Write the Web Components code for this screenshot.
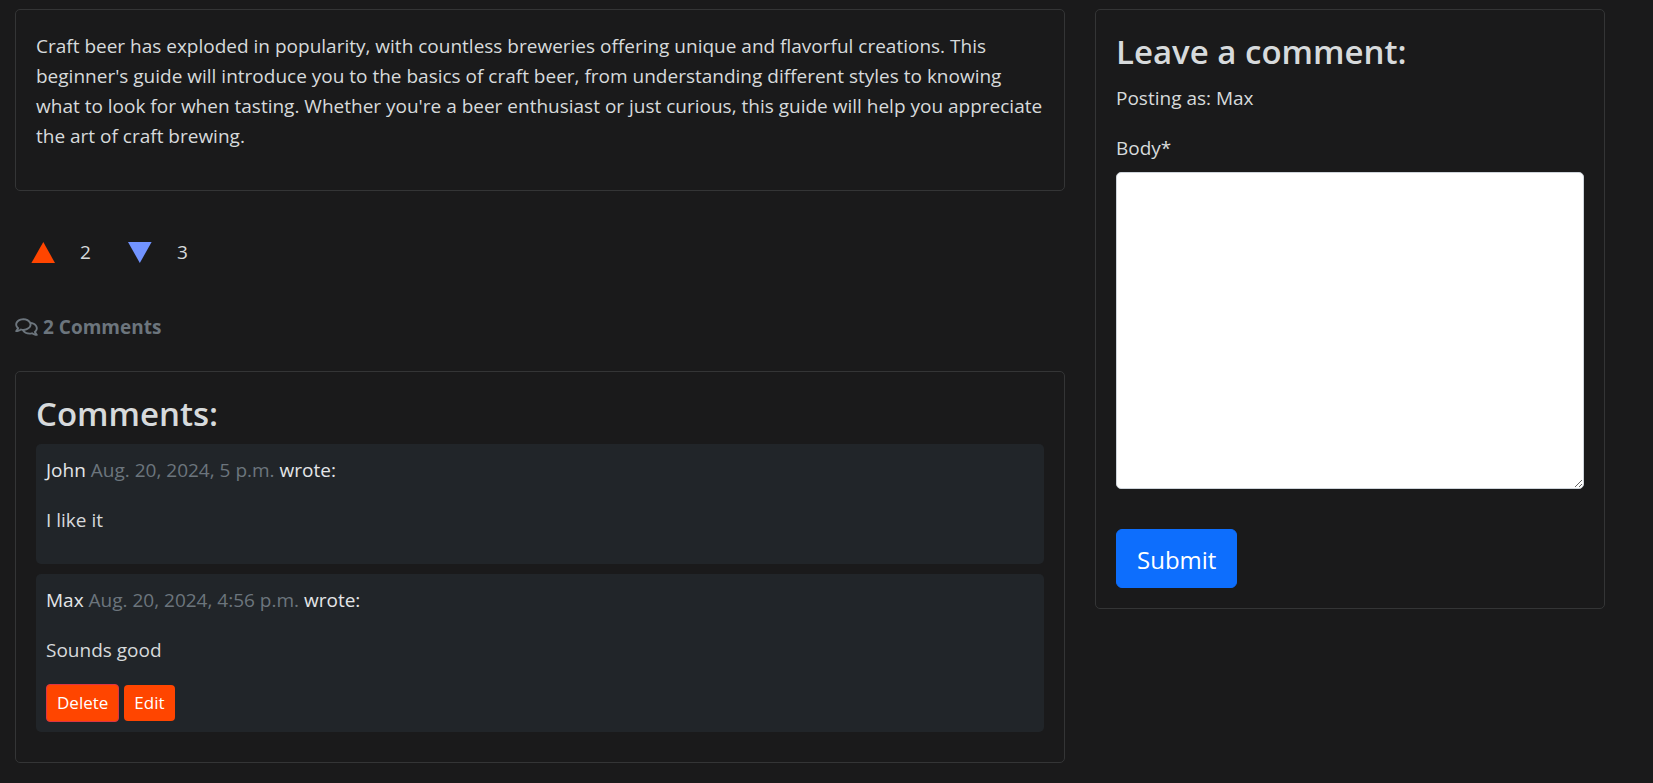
<!DOCTYPE html>
<html lang="en">
<head>
<meta charset="utf-8">
<meta name="viewport" content="width=device-width, initial-scale=1">
<title>Craft beer guide</title>
<style>
  body {
    margin: 0;
    background: #1a1a1b;
    color: #d7dadc;
    font: 19px/30px "Open Sans", "Noto Sans", sans-serif;
  }
</style>
</head>
<body>
<post-page>
  <ui-card>
    <post-text>Craft beer has exploded in popularity, with countless breweries offering unique and flavorful creations. This beginner's guide will introduce you to the basics of craft beer, from understanding different styles to knowing what to look for when tasting. Whether you're a beer enthusiast or just curious, this guide will help you appreciate the art of craft brewing.</post-text>
  </ui-card>
  <vote-bar up="2" down="3"></vote-bar>
  <comment-count>2 Comments</comment-count>
  <ui-card heading="Comments:">
    <user-comment author="John" date="Aug. 20, 2024, 5 p.m.">I like it</user-comment>
    <user-comment author="Max" date="Aug. 20, 2024, 4:56 p.m." editable>Sounds good</user-comment>
  </ui-card>
  <ui-card slot="side" heading="Leave a comment:">
    <comment-form user="Max"></comment-form>
  </ui-card>
</post-page>

<script>
const define = (name, html, setup) => customElements.define(name, class extends HTMLElement {
  connectedCallback() {
    if (this.shadowRoot) return;
    const root = this.attachShadow({ mode: "open" });
    const template = document.createElement("template");
    template.innerHTML = html;
    root.append(template.content.cloneNode(true));
    if (setup) setup(this, root);
  }
});

define("post-page", `
  <style>
    :host { display: block; padding: 9px 33px 20px 0; }
    .row { display: grid; grid-template-columns: 2fr 1fr; align-items: start; }
    main, aside { padding: 0 15px; min-width: 0; }
  </style>
  <div class="row">
    <main><slot></slot></main>
    <aside><slot name="side"></slot></aside>
  </div>`);

define("ui-card", `
  <style>
    :host { display: block; border: 1px solid #343536; border-radius: 5px; padding: 21px 20px 20px; }
    h3 { margin: 0 0 9px; font-size: 33px; line-height: 42px; font-weight: 600; }
    h3[hidden] { display: none; }
  </style>
  <h3 hidden></h3>
  <slot></slot>`, (host, root) => {
    const title = host.getAttribute("heading");
    if (title) {
      const h = root.querySelector("h3");
      h.textContent = title;
      h.hidden = false;
    }
  });

define("post-text", `
  <style>
    :host { display: block; }
    p { margin: 0 0 19px; }
  </style>
  <p><slot></slot></p>`);

define("vote-bar", `
  <style>
    :host { display: flex; align-items: center; padding: 46px 15px 45px; }
    button { border: 0; background: none; padding: 0; margin-right: 25px; width: 25px; display: grid; place-items: center; }
    span { width: 20px; margin-right: 27px; }
    svg { display: block; }
  </style>
  <button type="button" aria-label="Upvote"><svg width="25" height="21" viewBox="0 0 25 21"><path fill="#ff4500" d="M13.3 0 25 21H1.4z"/></svg></button>
  <span id="up"></span>
  <button type="button" aria-label="Downvote"><svg width="25" height="21" viewBox="0 0 25 21"><path fill="#7193ff" d="M12.8 21 24.6 0H1z"/></svg></button>
  <span id="down"></span>`, (host, root) => {
    root.getElementById("up").textContent = host.getAttribute("up");
    root.getElementById("down").textContent = host.getAttribute("down");
  });

define("comment-count", `
  <style>
    :host { display: flex; align-items: center; gap: 5px; margin-bottom: 29px; color: #6c757d; font-weight: 700; }
    svg { display: block; fill: currentColor; }
  </style>
  <svg width="23" height="20" viewBox="0 0 576 512" aria-hidden="true"><path d="M532 386.2c27.5-27.1 44-61.1 44-98.2 0-80-76.5-146.1-176.2-157.9C368.3 72.5 294.3 32 208 32 93.1 32 0 103.6 0 192c0 37 16.5 71 44 98.2-15.3 30.7-37.3 54.5-37.7 54.9-6.3 6.7-8.1 16.5-4.4 25 3.6 8.5 12 14 21.2 14 53.5 0 96.7-20.2 125.2-38.8 9.2 2.1 18.7 3.7 28.4 4.9C208.1 407.6 281.8 448 368 448c20.8 0 40.8-2.4 59.8-6.8C456.3 459.7 499.4 480 553 480c9.2 0 17.5-5.5 21.2-14 3.6-8.5 1.9-18.3-4.4-25-.4-.3-22.5-24.1-37.8-54.8zm-392.8-92.3L122.1 305c-14.1 9.1-28.5 16.3-43.1 21.4 2.7-4.7 5.4-9.7 8-14.8l15.5-31.1L77.7 256C64.2 242.6 48 220.7 48 192c0-60.7 73.3-112 160-112s160 51.3 160 112-73.3 112-160 112c-16.5 0-33-1.9-49-5.6l-19.8-4.5zM498.3 352l-24.7 24.4 15.5 31.1c2.6 5.1 5.3 10.1 8 14.8-14.6-5.1-29-12.3-43.1-21.4l-17.1-11.1-19.9 4.6c-16 3.7-32.5 5.6-49 5.6-54 0-102.2-20.1-131.3-49.7C338 339.5 416 272.9 416 192c0-3.4-.4-6.7-.7-10C479.7 196.5 528 238.8 528 288c0 28.7-16.2 50.6-29.7 64z"/></svg>
  <span><slot></slot></span>`);

define("user-comment", `
  <style>
    :host { display: block; background: #212529; border-radius: 5px; padding: 11px 10px 10px; margin-bottom: 10px; }
    p { margin: 0 0 20px; }
    p + p { margin-bottom: 19px; }
    b { font-weight: 400; color: #e4e6e8; }
    time { color: #6c757d; }
    .actions { display: flex; align-items: center; gap: 5px; }
    .actions[hidden] { display: none; }
    button { font: inherit; font-size: 17px; line-height: 26px; color: #fff; background: #ff4500; border: 0; border-radius: 4px; padding: 5px 10px; }
    .delete { border: 1px solid #dc3545; }
  </style>
  <p><b id="author"></b> <time></time> <b>wrote:</b></p>
  <p><slot></slot></p>
  <div class="actions" hidden>
    <button type="button" class="delete">Delete</button>
    <button type="button">Edit</button>
  </div>`, (host, root) => {
    root.getElementById("author").textContent = host.getAttribute("author");
    root.querySelector("time").textContent = host.getAttribute("date");
    root.querySelector(".actions").hidden = !host.hasAttribute("editable");
  });

define("comment-form", `
  <style>
    :host { display: block; }
    p { margin: 0; padding: 1px 0 20px; }
    label { display: block; margin-bottom: 9px; }
    textarea { display: block; box-sizing: border-box; width: 100%; height: 317px; margin: 0 0 40px; padding: 8px 15px; border: 1px solid #ced4da; border-radius: 5px; background: #fff; color: #212529; font: inherit; resize: vertical; }
    button { display: block; font: inherit; font-size: 24px; line-height: 37px; color: #fff; background: #0d6efd; border: 1px solid #0d6efd; border-radius: 6px; padding: 11px 20px 9px; }
  </style>
  <form>
    <p>Posting as: <span id="user"></span></p>
    <label for="body">Body*</label>
    <textarea id="body" name="body" required></textarea>
    <button type="submit">Submit</button>
  </form>`, (host, root) => {
    root.getElementById("user").textContent = host.getAttribute("user");
  });
</script>
</body>
</html>
